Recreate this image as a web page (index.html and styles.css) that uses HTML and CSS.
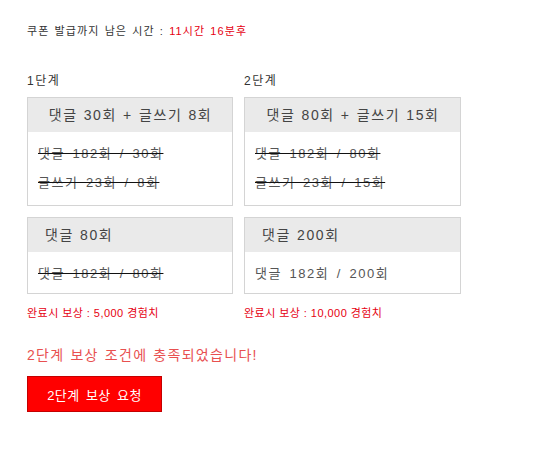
FILE: index.html
```html
<!DOCTYPE html>
<html lang="ko">
<head>
<meta charset="utf-8">
<link rel="stylesheet" href="styles.css">
</head>
<body>
<div class="page">
  <p class="timer">쿠폰 발급까지 남은 시간 : <span class="red">11시간 16분후</span></p>
  <div class="grid">
    <div class="col col1">
      <div class="label">1단계</div>
      <div class="box">
        <div class="head center">댓글 30회 + 글쓰기 8회</div>
        <div class="body">
          <div class="row done">댓글 182회 / 30회</div>
          <div class="row done">글쓰기 23회 / 8회</div>
        </div>
      </div>
      <div class="box">
        <div class="head">댓글 80회</div>
        <div class="body single">
          <div class="row done">댓글 182회 / 80회</div>
        </div>
      </div>
      <div class="reward">완료시 보상 : 5,000 경험치</div>
    </div>
    <div class="col col2">
      <div class="label">2단계</div>
      <div class="box">
        <div class="head center">댓글 80회 + 글쓰기 15회</div>
        <div class="body">
          <div class="row done">댓글 182회 / 80회</div>
          <div class="row done">글쓰기 23회 / 15회</div>
        </div>
      </div>
      <div class="box">
        <div class="head">댓글 200회</div>
        <div class="body single">
          <div class="row">댓글 182회 / 200회</div>
        </div>
      </div>
      <div class="reward">완료시 보상 : 10,000 경험치</div>
    </div>
  </div>
  <p class="notice">2단계 보상 조건에 충족되었습니다!</p>
  <button class="btn" type="button">2단계 보상 요청</button>
</div>
</body>
</html>
```
FILE: styles.css
```css
html, body {
  margin: 0;
  padding: 0;
  background: #fff;
}
body {
  font-family: "Liberation Sans", "Noto Sans CJK KR", sans-serif;
  color: #333;
}
.page {
  padding: 22px 0 0 27px;
}
.timer {
  margin: 0;
  font-size: 11px;
  line-height: 18px;
  color: #333;
  letter-spacing: 1.1px;
  word-spacing: 1px;
}
.red {
  color: #e60012;
}
.grid {
  display: flex;
  gap: 11px;
  margin-top: 33px;
}
.col1 { width: 206px; }
.col2 { width: 217px; }
.label {
  font-size: 12px;
  line-height: 16px;
  color: #333;
  letter-spacing: 1.5px;
  margin-bottom: 8px;
}
.box {
  border: 1px solid #d4d4d4;
  margin-bottom: 11px;
}
.head {
  background: #eaeaea;
  height: 34px;
  line-height: 34px;
  font-size: 14px;
  letter-spacing: 1.6px;
  word-spacing: 0.6px;
  color: #444;
  padding-left: 17px;
}
.head.center {
  padding-left: 1px;
  text-align: center;
}
.body {
  padding: 7px 10px 8px;
}
.body.single {
  padding-bottom: 5px;
}
.row {
  font-size: 13px;
  line-height: 29px;
  color: #555;
  letter-spacing: 1.5px;
  word-spacing: 2.5px;
}
.row.done {
  text-decoration: line-through;
  text-decoration-color: #111;
}
.reward {
  font-size: 11px;
  color: #e60012;
  line-height: 16px;
  letter-spacing: 0.45px;
  margin-top: 7px;
}
.notice {
  margin: 25px 0 0;
  font-size: 14px;
  line-height: 18px;
  color: #e85050;
  letter-spacing: 1.3px;
  word-spacing: 0.8px;
}
.btn {
  display: block;
  margin-top: 12px;
  width: 135px;
  height: 36px;
  background: #ff0000;
  border: 1px solid #c40000;
  color: #fff;
  font-family: inherit;
  font-size: 13px;
  letter-spacing: 0.5px;
  word-spacing: 2px;
  padding: 0;
}
```
